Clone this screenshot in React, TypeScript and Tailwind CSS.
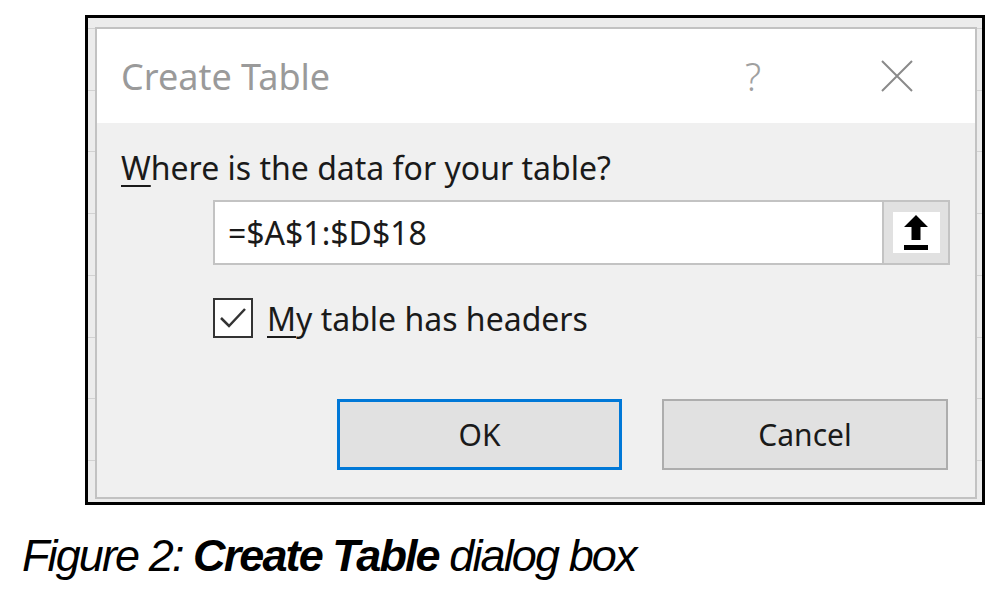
export default function App() {
  const ui = { fontFamily: '"Noto Sans", "Open Sans", sans-serif' }

  return (
    <div className="w-[1008px] h-[592px] bg-white overflow-hidden">
      <div className="ml-[85px] mt-[15px] w-[900px] h-[490px] border-[3px] border-black bg-[#ececec] bg-[repeating-linear-gradient(to_bottom,transparent_0,transparent_10px,#d2d2d2_10px,#d2d2d2_11px,transparent_11px,transparent_61.7px)] pl-[7px] pt-[9px]">
        <div className="w-[882px] h-[472px] border-2 border-[#c2c2c2] flex flex-col" style={ui}>
          {/* title bar */}
          <div className="h-[94px] bg-white flex items-center pl-[24px] shrink-0">
            <span className="w-[624px] text-[36px] text-[#9a9a9a] leading-none pt-[2px]">Create Table</span>
            <span className="text-[38px] text-[#a0a0a0] font-light leading-none">?</span>
            <svg className="ml-[120px]" width="32" height="32" viewBox="0 0 32 32">
              <path d="M1 1 L31 31 M31 1 L1 31" stroke="#8a8a8a" strokeWidth="2" fill="none" />
            </svg>
          </div>

          {/* body */}
          <div className="flex-1 bg-[#f0f0f0] flex flex-col pl-[24px]">
            <div className="mt-[27px] text-[32px] leading-[36px] text-[#1a1a1a]">
              <span className="underline underline-offset-[5px] decoration-2">W</span>here is the data for your table?
            </div>

            <div className="mt-[14px] ml-[92px] w-[737px] h-[65px] border-2 border-[#c3c3c3] bg-white flex">
              <div className="flex-1 flex items-center pl-[13px] text-[32px] text-[#1a1a1a]">=$A$1:$D$18</div>
              <div className="w-[66px] bg-[#e1e1e1] border-l-2 border-[#c3c3c3] flex items-center justify-center">
                <div className="w-[47px] h-[41px] bg-white flex items-center justify-center">
                  <svg width="24" height="35" viewBox="0 0 24 35">
                    <path d="M12 0 L24 12 L16.5 12 L16.5 25 L7.5 25 L7.5 12 L0 12 Z" fill="#000" />
                    <rect x="0" y="30" width="24" height="5" fill="#000" />
                  </svg>
                </div>
              </div>
            </div>

            <div className="mt-[33px] ml-[92px] flex items-center">
              <div className="w-[40px] h-[40px] border-2 border-[#333] bg-white flex items-center justify-center">
                <svg width="36" height="36" viewBox="0 0 36 36">
                  <path d="M6 18 L14 26 L30 9" stroke="#333" strokeWidth="2.5" fill="none" />
                </svg>
              </div>
              <span className="ml-[14px] text-[32px] leading-[36px] text-[#1a1a1a] pt-[2px]">
                <span className="underline underline-offset-[5px] decoration-2">M</span>y table has headers
              </span>
            </div>

            <div className="mt-[61px] ml-[216px] flex gap-[40px]">
              <button className="w-[285px] h-[71px] bg-[#e1e1e1] border-[3px] border-[#0078d7] text-[30px] text-[#1a1a1a]">OK</button>
              <button className="w-[286px] h-[71px] bg-[#e1e1e1] border-2 border-[#adadad] text-[30px] text-[#1a1a1a]">Cancel</button>
            </div>
          </div>
        </div>
      </div>

      <div
        className="ml-[22px] mt-[28px] text-[45px] leading-none italic text-black tracking-[-1.9px]"
        style={{ fontFamily: '"Liberation Sans", Arial, sans-serif' }}
      >
        Figure 2: <span className="font-bold">Create Table</span> dialog box
      </div>
    </div>
  )
}
